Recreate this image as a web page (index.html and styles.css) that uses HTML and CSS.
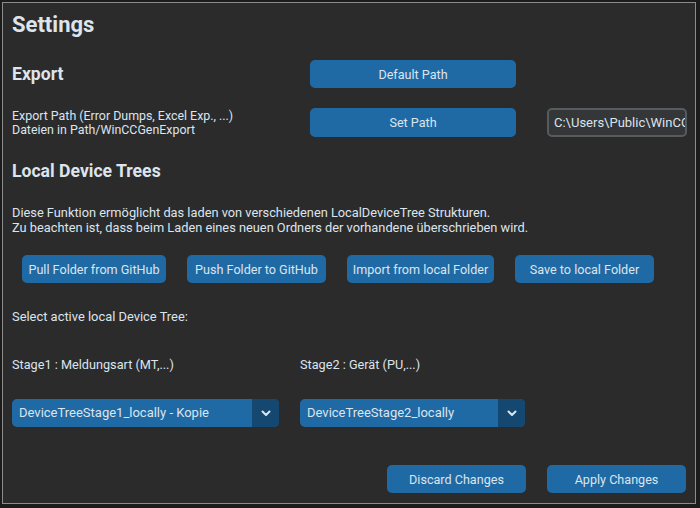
FILE: index.html
```html
<!DOCTYPE html>
<html>
<head>
<meta charset="utf-8">
<link rel="stylesheet" href="styles.css">
</head>
<body>
<div class="window">
  <h1 class="title">Settings</h1>

  <div class="row row-export">
    <div class="label-col"><h2 class="section">Export</h2></div>
    <button class="btn btn-wide">Default Path</button>
  </div>

  <div class="row row-path">
    <div class="label-col small">Export Path (Error Dumps, Excel Exp., ...)<br>Dateien in Path/WinCCGenExport</div>
    <button class="btn btn-wide btn-tall">Set Path</button>
    <div class="entry"><span>C:\Users\Public\WinCCGenExport</span></div>
  </div>

  <h2 class="section section-trees">Local Device Trees</h2>

  <p class="desc">Diese Funktion ermöglicht das laden von verschiedenen LocalDeviceTree Strukturen.<br>Zu beachten ist, dass beim Laden eines neuen Ordners der vorhandene überschrieben wird.</p>

  <div class="btn-row">
    <button class="btn w144">Pull Folder from GitHub</button>
    <button class="btn w139">Push Folder to GitHub</button>
    <button class="btn w147">Import from local Folder</button>
    <button class="btn w139">Save to local Folder</button>
  </div>

  <p class="plain select">Select active local Device Tree:</p>

  <div class="stage-labels">
    <span class="stage1">Stage1 : Meldungsart (MT,...)</span>
    <span>Stage2 : Gerät (PU,...)</span>
  </div>

  <div class="combos">
    <div class="combo combo1">
      <span class="combo-text">DeviceTreeStage1_locally - Kopie</span>
      <span class="combo-arrow"><svg width="10" height="7" viewBox="0 0 10 7"><path d="M1.5 1.5 L5 5 L8.5 1.5" fill="none" stroke="#dce4ee" stroke-width="2" stroke-linecap="round" stroke-linejoin="round"/></svg></span>
    </div>
    <div class="combo combo2">
      <span class="combo-text">DeviceTreeStage2_locally</span>
      <span class="combo-arrow"><svg width="10" height="7" viewBox="0 0 10 7"><path d="M1.5 1.5 L5 5 L8.5 1.5" fill="none" stroke="#dce4ee" stroke-width="2" stroke-linecap="round" stroke-linejoin="round"/></svg></span>
    </div>
  </div>

  <div class="footer">
    <button class="btn w139">Discard Changes</button>
    <button class="btn w139">Apply Changes</button>
  </div>
</div>
</body>
</html>
```

FILE: styles.css
```css
html, body {
  margin: 0;
  padding: 0;
  background: #1c1c1c;
  width: 700px;
  height: 508px;
  overflow: hidden;
}

.window {
  margin: 2px 0 0 2px;
  width: 694px;
  height: 502px;
  box-sizing: border-box;
  border: 1px solid #8c8c8c;
  background: #2b2b2b;
  font-family: Roboto, "Liberation Sans", sans-serif;
  color: #dce4ee;
  padding: 0 0 0 9px;
}

.title {
  margin: 10px 0 0 0;
  font-size: 22px;
  line-height: 24px;
  font-weight: 700;
  height: 24px;
}

.row {
  display: flex;
  align-items: center;
}

.label-col {
  width: 298px;
  flex: none;
}

.row-export {
  margin-top: 23px;
  height: 28px;
}

.row-path {
  margin-top: 20px;
  height: 29px;
}

.section {
  margin: 0;
  font-size: 17.6px;
  line-height: 20px;
  font-weight: 700;
}

.small {
  font-size: 12.4px;
  line-height: 14px;
}

.btn {
  font-family: Roboto, "Liberation Sans", sans-serif;
  font-size: 12.6px;
  color: #dce4ee;
  background: #1f6aa5;
  border: none;
  border-radius: 5px;
  height: 28px;
  padding: 0;
  flex: none;
}

.btn-wide {
  width: 206px;
}

.btn-tall {
  height: 29px;
}

.entry {
  margin-left: 31px;
  width: 140px;
  height: 29px;
  box-sizing: border-box;
  border: 2px solid #565b5e;
  border-radius: 5px;
  background: #343638;
  overflow: hidden;
  white-space: nowrap;
  font-size: 13px;
  line-height: 25px;
  padding-left: 5px;
  flex: none;
}

.section-trees {
  margin-top: 24px;
}

.desc {
  margin: 24px 0 0 0;
  font-size: 12.8px;
  line-height: 15px;
}

.btn-row {
  display: flex;
  gap: 21px;
  margin-top: 20px;
  padding-left: 10px;
}

.w144 { width: 144px; }
.w139 { width: 139px; }
.w147 { width: 147px; }

.plain {
  margin: 0;
  font-size: 12.9px;
  line-height: 16px;
}

.select {
  margin-top: 26px;
}

.stage-labels {
  display: flex;
  margin-top: 32px;
  font-size: 12.7px;
  line-height: 16px;
}

.stage1 {
  width: 288px;
  flex: none;
}

.combos {
  display: flex;
  gap: 21px;
  margin-top: 26px;
}

.combo {
  display: flex;
  height: 28px;
  border-radius: 5px;
  background: #1f6aa5;
  overflow: hidden;
}

.combo1 { width: 267px; }
.combo2 { width: 225px; }

.combo-text {
  flex: 1;
  font-size: 13px;
  line-height: 28px;
  padding-left: 7px;
  white-space: nowrap;
}

.combo-arrow {
  width: 27px;
  background: #144870;
  display: flex;
  align-items: center;
  justify-content: center;
}

.footer {
  display: flex;
  gap: 21px;
  margin-top: 38px;
  padding-left: 375px;
}
```
